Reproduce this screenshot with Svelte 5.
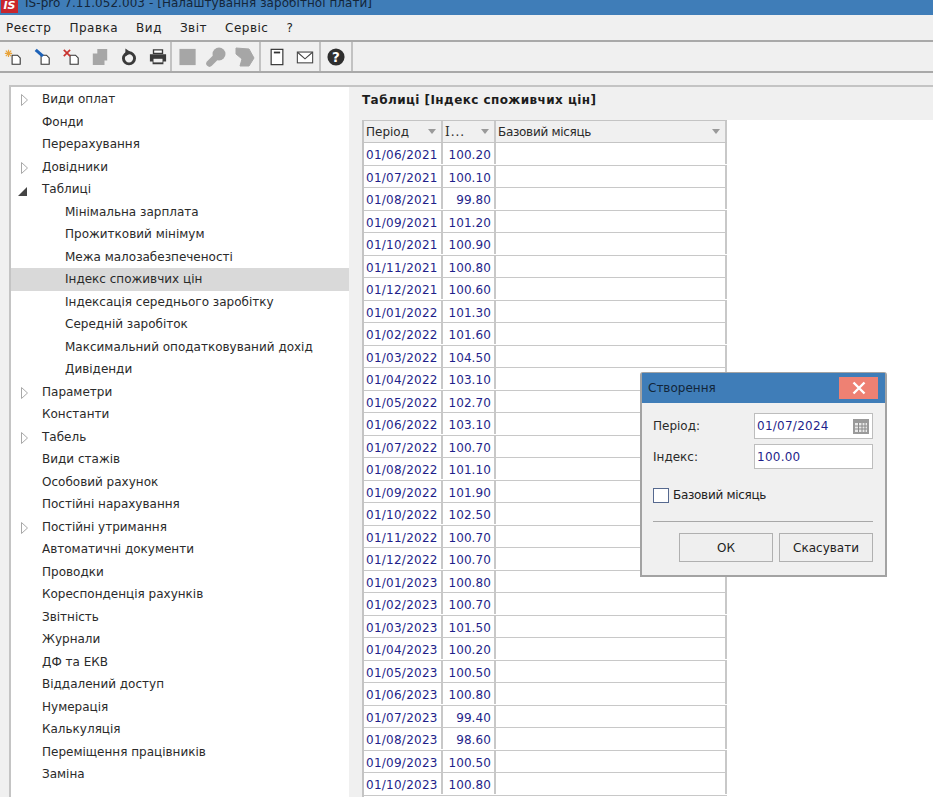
<script>
  const tree = [
    { t: 'Види оплат', a: 'c' }, { t: 'Фонди' }, { t: 'Перерахування' }, { t: 'Довідники', a: 'c' },
    { t: 'Таблиці', a: 'o' }, { t: 'Мінімальна зарплата', s: 1 }, { t: 'Прожитковий мінімум', s: 1 },
    { t: 'Межа малозабезпеченості', s: 1 }, { t: 'Індекс споживчих цін', s: 1, sel: 1 },
    { t: 'Індексація середнього заробітку', s: 1 }, { t: 'Середній заробіток', s: 1 },
    { t: 'Максимальний оподатковуваний дохід', s: 1 }, { t: 'Дивіденди', s: 1 },
    { t: 'Параметри', a: 'c' }, { t: 'Константи' }, { t: 'Табель', a: 'c' }, { t: 'Види стажів' },
    { t: 'Особовий рахунок' }, { t: 'Постійні нарахування' }, { t: 'Постійні утримання', a: 'c' },
    { t: 'Автоматичні документи' }, { t: 'Проводки' }, { t: 'Кореспонденція рахунків' }, { t: 'Звітність' },
    { t: 'Журнали' }, { t: 'ДФ та ЕКВ' }, { t: 'Віддалений доступ' }, { t: 'Нумерація' }, { t: 'Калькуляція' },
    { t: 'Переміщення працівників' }, { t: 'Заміна' }
  ];
  const rows = [
    ['01/06/2021','100.20'],['01/07/2021','100.10'],['01/08/2021','99.80'],['01/09/2021','101.20'],
    ['01/10/2021','100.90'],['01/11/2021','100.80'],['01/12/2021','100.60'],['01/01/2022','101.30'],
    ['01/02/2022','101.60'],['01/03/2022','104.50'],['01/04/2022','103.10'],['01/05/2022','102.70'],
    ['01/06/2022','103.10'],['01/07/2022','100.70'],['01/08/2022','101.10'],['01/09/2022','101.90'],
    ['01/10/2022','102.50'],['01/11/2022','100.70'],['01/12/2022','100.70'],['01/01/2023','100.80'],
    ['01/02/2023','100.70'],['01/03/2023','101.50'],['01/04/2023','100.20'],['01/05/2023','100.50'],
    ['01/06/2023','100.80'],['01/07/2023','99.40'],['01/08/2023','98.60'],['01/09/2023','100.50'],
    ['01/10/2023','100.80']
  ];
  const menu = ['Реєстр', 'Правка', 'Вид', 'Звіт', 'Сервіс', '?'];
</script>

<div class="app">
  <div class="title">
    <span class="logo">IS</span>
    <span class="ttext">IS-pro 7.11.052.003 - [Налаштування заробітної плати]</span>
  </div>
  <div class="menu">
    {#each menu as m}<span>{m}</span>{/each}
  </div>
  <div class="toolbar">
    <div class="tgroup g1">
      <svg class="ic" viewBox="0 0 20 20"><path d="M9 8h6l3 3v7H9z" fill="#fff" stroke="#333" stroke-width="1.2"/><path d="M5 2v8M1 6h8M2 3l6 6M8 3l-6 6" stroke="#e8a33a" stroke-width="1.3"/></svg>
      <svg class="ic" viewBox="0 0 20 20"><path d="M9 8h6l3 3v7H9z" fill="#fff" stroke="#333" stroke-width="1.2"/><path d="M3 2l8 7" stroke="#1d62b8" stroke-width="3.4"/></svg>
      <svg class="ic" viewBox="0 0 20 20"><path d="M9 8h6l3 3v7H9z" fill="#fff" stroke="#333" stroke-width="1.2"/><path d="M2 2l7 7M9 2l-7 7" stroke="#c8322e" stroke-width="1.9"/></svg>
      <svg class="ic" viewBox="0 0 20 20"><path d="M7 1h11v13h-3v5H2V6h5z" fill="#a6a6a6"/></svg>
      <svg class="ic" viewBox="0 0 20 20"><circle cx="10" cy="11.5" r="6.2" fill="none" stroke="#3a3a3a" stroke-width="3.2"/><path d="M6 0.5l6.500 4.500-6.500 4.500z" fill="#3a3a3a"/></svg>
      <svg class="ic" viewBox="0 0 20 20"><path d="M5 2h10v4H5z" fill="#fff" stroke="#3a3a3a" stroke-width="1.5"/><path d="M1 7h18v8h-3v3H4v-3H1z" fill="#3a3a3a"/><path d="M5 12h10v4H5z" fill="#f0f0f0"/></svg>
    </div>
    <div class="tgroup g2">
      <svg class="ic" viewBox="0 0 20 20"><rect x="0.5" y="1" width="18" height="18" fill="#a6a6a6"/></svg>
      <svg class="ic wide" viewBox="0 0 20 20"><circle cx="13" cy="7" r="6.500" fill="#a6a6a6"/><path d="M10.5 9.5L3.5 16.5" stroke="#a6a6a6" stroke-width="6.5" stroke-linecap="round"/></svg>
      <svg class="ic wide" viewBox="0 0 20 20"><path d="M1 1l13 1 5 9-5 8H5l2-7-6-5z" fill="#a6a6a6" stroke="#a6a6a6" stroke-linejoin="round"/></svg>
    </div>
    <div class="tgroup g3">
      <svg class="ic" viewBox="0 0 20 20"><rect x="3.5" y="1.5" width="13" height="17" fill="#fff" stroke="#333" stroke-width="1.3"/><path d="M6.5 5h7" stroke="#333" stroke-width="2"/></svg>
      <svg class="ic" viewBox="0 0 20 20"><rect x="1.5" y="4.5" width="17" height="12" fill="#fff" stroke="#444" stroke-width="1.2"/><path d="M2 5l8 7 8-7" fill="none" stroke="#444" stroke-width="1.2"/></svg>
    </div>
    <div class="tgroup g4">
      <svg class="ic" viewBox="0 0 20 20"><circle cx="10" cy="10" r="9.5" fill="#2f2f2f"/><text class="q" x="10" y="15.5" text-anchor="middle">?</text></svg>
    </div>
  </div>

  <div class="work">
    <div class="tree">
      {#each tree as n}
        <div class="node" class:sel={n.sel} class:sub={n.s}>
          {#if n.a === 'c'}
            <svg class="arrow" viewBox="0 0 7 12"><path d="M0.5 0.5l6 5.500-6 5.500z" fill="#fff" stroke="#a8a8a8"/></svg>
          {:else if n.a === 'o'}
            <svg class="arrow open" viewBox="0 0 9 9"><path d="M0 9h9V0z" fill="#444"/></svg>
          {/if}
          <span>{n.t}</span>
        </div>
      {/each}
    </div>
    <div class="right">
      <div class="rhead">Таблиці [Індекс споживчих цін]</div>
      <div class="rbody">
        <div class="gutter"></div>
        <div class="table">
          <div class="hrow">
            <div class="h c1">Період<i></i></div>
            <div class="h c2"><b>I...</b><i></i></div>
            <div class="h c3"><span class="tight">Базовий місяць</span><i></i></div>
          </div>
          {#each rows as r}
            <div class="row">
              <div class="d c1">{r[0]}</div>
              <div class="d c2">{r[1]}</div>
              <div class="d c3"></div>
            </div>
          {/each}
        </div>
      </div>
    </div>
  </div>

  <div class="dialog">
    <div class="dtitle">
      <span>Створення</span>
      <div class="close">
        <svg viewBox="0 0 14 14" width="14" height="14"><path d="M1.5 1.5l11 11M12.5 1.5l-11 11" stroke="#fff" stroke-width="2.4"/></svg>
      </div>
    </div>
    <div class="dbody">
      <div class="field">
        <span class="lab">Період:</span>
        <div class="input">
          <span>01/07/2024</span>
          <svg class="cal" viewBox="0 0 16 16"><rect x="0" y="1" width="16" height="15" fill="#9a9a9a"/><path d="M2 5h12v9H2z" fill="#e8e8e8"/><path d="M2 8h12M2 11h12M5.5 5v9M9 5v9M12 5v9" stroke="#8a8a8a"/></svg>
        </div>
      </div>
      <div class="field f2">
        <span class="lab">Індекс:</span>
        <div class="input"><span>100.00</span></div>
      </div>
      <div class="check"><span class="box"></span><span class="tight">Базовий місяць</span></div>
      <div class="sep"></div>
      <div class="btns">
        <div class="btn">ОК</div>
        <div class="btn">Скасувати</div>
      </div>
    </div>
  </div>
</div>

<style>
  :global(body) { margin: 0; }
  .app {
    position: relative;
    width: 933px;
    height: 797px;
    overflow: hidden;
    background: #f0f0f0;
    font-family: "DejaVu Sans", "Noto Sans", sans-serif;
    font-size: 12px;
    color: #222;
    display: flex;
    flex-direction: column;
  }
  .title {
    height: 15px;
    flex: none;
    background: #3f7db8;
    display: flex;
    align-items: flex-start;
    overflow: hidden;
    color: #14263a;
    font-size: 12px;
    line-height: 13px;
  }
  .logo {
    width: 17px; height: 13px; margin-left: 1px;
    background: #c9262c; color: #fff; font-weight: 700; font-size: 11px; line-height: 12px; text-align: center;
    font-style: italic;
    flex: none;
  }
  .ttext { margin-left: 7px; margin-top: -3px; white-space: nowrap; letter-spacing: 0.05px; }
  .menu {
    height: 25px; flex: none; display: flex; align-items: center;
    padding-left: 6px; gap: 18px; font-size: 12px; letter-spacing: 0.5px;
    border-bottom: 2px solid #a9a9a9;
  }
  .toolbar {
    height: 29px; flex: none; display: flex; align-items: center;
    border-bottom: 2px solid #a9a9a9;
  }
  .tgroup { display: flex; height: 100%; align-items: center; border-right: 2px solid #c2c2c2; box-sizing: border-box; }
  .g1 { width: 172px; padding-left: 4px; gap: 11px; }
  .g2 { width: 89px; padding-left: 7px; gap: 9px; }
  .g3 { width: 60px; padding-left: 7px; gap: 10px; }
  .g4 { width: 32px; padding-left: 6px; }
  .ic { width: 18px; height: 18px; flex: none; }
  .ic.wide { width: 20px; height: 20px; }
  .q { font-size: 15px; font-weight: 700; fill: #fff; font-family: "DejaVu Sans", sans-serif; }
  .work { flex: 1; display: flex; padding: 12px 0 0 9px; min-height: 0; }
  .tree {
    width: 340px; flex: none; background: #fff; box-sizing: border-box;
    border-top: 2px solid #c4c4c4; border-left: 2px solid #c4c4c4;
    padding-top: 1px;
  }
  .node {
    height: 22.5px; display: flex; align-items: center; position: relative;
    padding-left: 31px; white-space: nowrap; font-size: 12px; color: #2a2a2a;
  }
  .node.sub { padding-left: 54px; }
  .node.sel { background: #d9d9d9; }
  .arrow { position: absolute; left: 10px; top: 6px; width: 7px; height: 12px; }
  .arrow.open { left: 7px; top: 9px; width: 9px; height: 9px; }
  .right { flex: 1; display: flex; flex-direction: column; min-width: 0; }
  .rhead {
    height: 35px; flex: none; padding: 0 0 7px 13px; font-weight: 700; font-size: 12px; letter-spacing: 0.43px;
    display: flex; align-items: center; color: #1c1c1c; border-top: 2px solid #c4c4c4; box-sizing: border-box;
  }
  .rbody { flex: 1; display: flex; background: #fff; min-height: 0; overflow: hidden; }
  .gutter { width: 13px; flex: none; background: #f0f0f0; }
  .table { width: 365px; flex: none; border-left: 2px solid #c4c4c4; border-top: 1px solid #c4c4c4; box-sizing: border-box; }
  .hrow { height: 22px; display: flex; background: #f0f0f0; border-bottom: 1px solid #c4c4c4; box-sizing: border-box; }
  .row { height: 22.5px; display: flex; border-bottom: 1px solid #c8c8c8; box-sizing: border-box; color: #1f1f8a; }
  .c1 { width: 79px; flex: none; box-sizing: border-box; border-right: 2px solid #c8c8c8; }
  .c2 { width: 53px; flex: none; box-sizing: border-box; border-right: 2px solid #c8c8c8; }
  .c3 { flex: 1; box-sizing: border-box; border-right: 2px solid #c8c8c8; }
  .h { position: relative; padding-left: 2px; line-height: 23px; font-size: 12px; color: #2a2a2a; }
  .h b { font-weight: 400; font-family: "DejaVu Serif", serif; letter-spacing: 1px; }
  .h i {
    position: absolute; right: 5px; top: 8px; width: 0; height: 0;
    border-left: 4px solid transparent; border-right: 4px solid transparent; border-top: 5px solid #9a9a9a;
  }
  .tight { letter-spacing: -0.3px; }
  .d { line-height: 24px; font-size: 12px; padding: 0 2px; letter-spacing: 0.25px; overflow: hidden; height: 21px; }
  .d.c2 { text-align: right; letter-spacing: 0.1px; padding-right: 3px; }
  .dialog {
    position: absolute; left: 640px; top: 372px; width: 247px; height: 205px;
    box-sizing: border-box; border: 2px solid #a3a3a3; border-top: 1px solid #a3a3a3; background: #f0f0f0;
    border-radius: 3px 3px 0 0;
  }
  .dtitle {
    height: 30px; background: #3f7db8; display: flex; align-items: center; justify-content: space-between;
    padding-left: 6px; font-size: 12px; color: #12263a;
  }
  .close {
    width: 39px; height: 22px; background: #ee8173; display: flex; align-items: center; justify-content: center;
    margin-right: 7px;
  }
  .dbody { padding: 10px 12px 0 11px; display: flex; flex-direction: column; }
  .field { display: flex; align-items: center; justify-content: space-between; height: 26px; }
  .f2 { margin-top: 5px; height: 25px; }
  .lab { color: #2a2a2a; font-size: 12px; }
  .input {
    width: 119px; height: 100%; box-sizing: border-box; border: 1px solid #bdbdbd; background: #fff;
    display: flex; align-items: center; justify-content: space-between; padding: 0 3px 0 2px; color: #1f1f8a;
    letter-spacing: 0.25px;
  }
  .cal { width: 16px; height: 16px; }
  .check { display: flex; align-items: center; gap: 4px; margin-top: 18px; height: 16px; }
  .box { width: 16px; height: 15px; border: 1px solid #56698f; background: #fff; flex: none; box-sizing: border-box; }
  .sep { height: 1px; background: #a8a8a8; margin-top: 18px; }
  .btns { display: flex; justify-content: flex-end; gap: 6px; margin-top: 11px; }
  .btn {
    width: 94px; height: 29px; box-sizing: border-box; border: 1px solid #b0b0b0; background: #efefef;
    display: flex; align-items: center; justify-content: center; color: #222;
  }
</style>
